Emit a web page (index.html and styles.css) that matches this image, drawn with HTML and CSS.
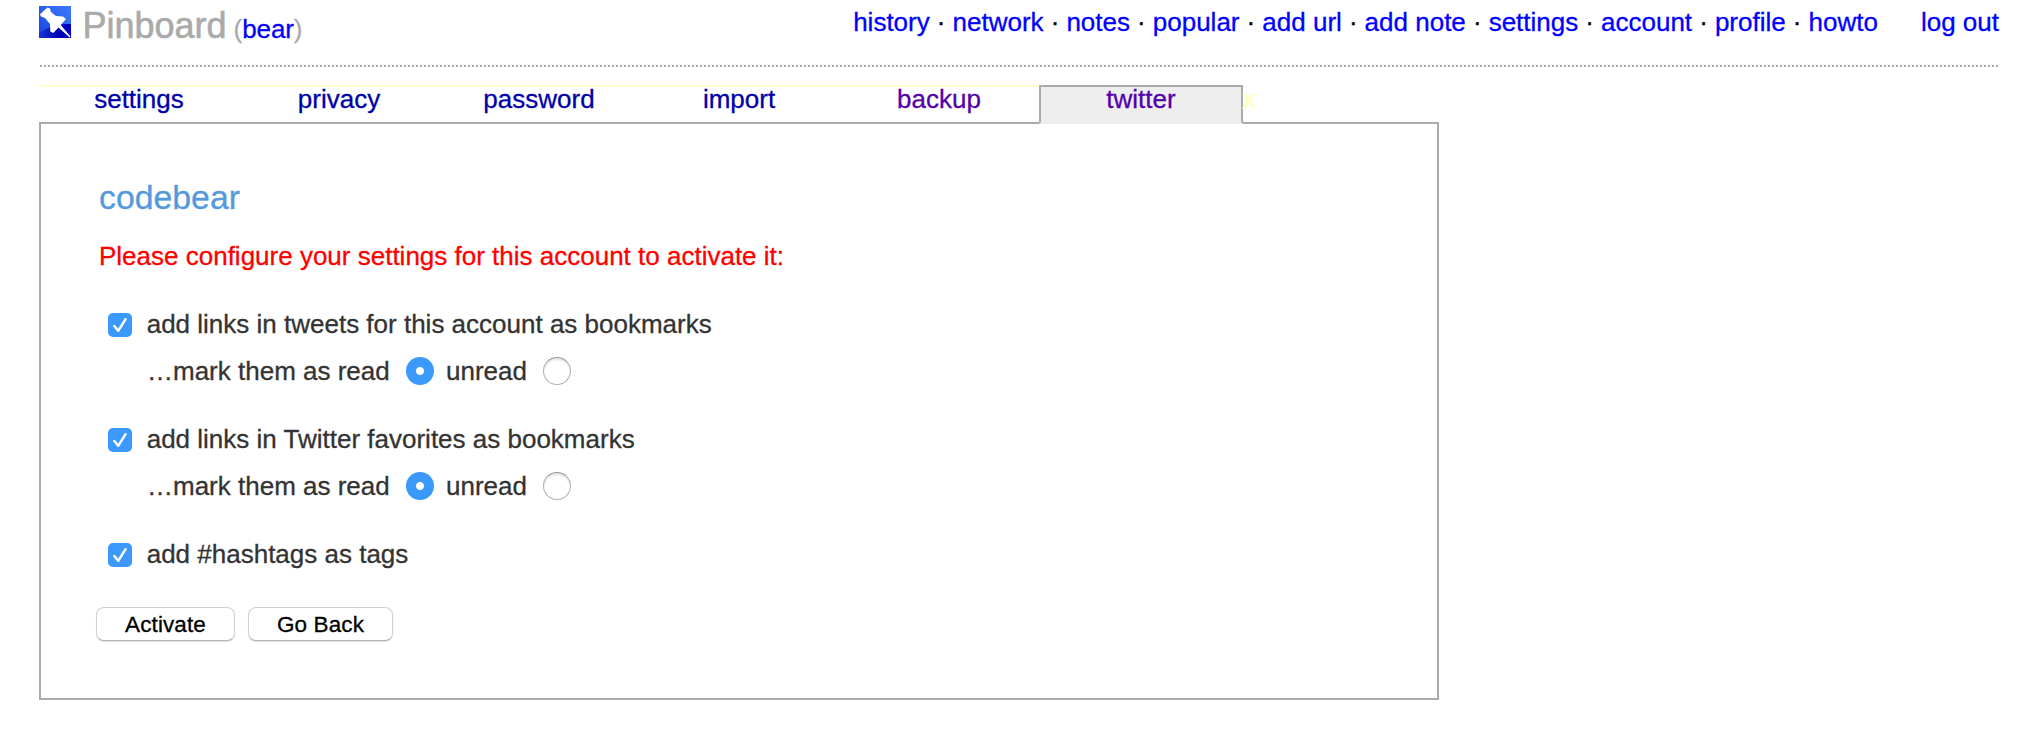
FILE: index.html
```html
<!DOCTYPE html>
<html lang="en">
<head>
<meta charset="utf-8">
<title>Pinboard: twitter settings</title>
<link rel="stylesheet" href="styles.css">
</head>
<body>
<header class="banner">
  <div class="brand">
    <svg class="logo" viewBox="0 0 32 32" aria-hidden="true">
      <defs>
        <linearGradient id="sky" x1="1" y1="0" x2="0" y2="1">
          <stop offset="0" stop-color="#3d7cff"/>
          <stop offset="1" stop-color="#1742e0"/>
        </linearGradient>
        <linearGradient id="ground" x1="0" y1="0" x2="1" y2="0">
          <stop offset="0" stop-color="#163bd6"/>
          <stop offset=".6" stop-color="#0000b4"/>
          <stop offset="1" stop-color="#0000d0"/>
        </linearGradient>
      </defs>
      <rect width="32" height="32" fill="url(#sky)"/>
      <path d="M0 27Q14 17 32 18V32H0Z" fill="url(#ground)"/>
      <path d="M8.5 1.5L11 2.5L12 6L17 10L24 10.5L27 13L21.7 19L31.5 30.5L30.7 31.5L19.5 21.5L14.3 27L11.3 25.5L11 18L6 12L2 10.5L1 8.3Z" fill="#fff"/>
    </svg>
    <span class="name">Pinboard</span>
    <span class="user">(<a href="#">bear</a>)</span>
  </div>
  <nav class="menu">
    <a href="#">history</a><i>·</i><a href="#">network</a><i>·</i><a href="#">notes</a><i>·</i><a href="#">popular</a><i>·</i><a href="#">add url</a><i>·</i><a href="#">add note</a><i>·</i><a href="#">settings</a><i>·</i><a href="#">account</a><i>·</i><a href="#">profile</a><i>·</i><a href="#">howto</a><a class="logout" href="#">log out</a>
  </nav>
</header>
<svg class="rule" width="1960" height="2" aria-hidden="true"><path d="M1 1H1960" stroke="#aaa" stroke-width="2" stroke-dasharray="2 2"/></svg>
<nav class="tabs">
  <a class="tab" href="#">settings</a>
  <a class="tab" href="#">privacy</a>
  <a class="tab" href="#">password</a>
  <a class="tab" href="#">import</a>
  <a class="tab seen" href="#">backup</a>
  <a class="tab seen active" href="#">twitter</a>
  <span class="tab-end">x</span>
</nav>
<main class="panel">
  <h1 class="account">codebear</h1>
  <p class="warning">Please configure your settings for this account to activate it:</p>
  <form class="options">
    <div class="option">
      <div class="line"><svg class="check" viewBox="0 0 24 24"><path d="M6.3 13L10.2 17.8L17.6 6.2"/></svg><span>add links in tweets for this account as bookmarks</span></div>
      <div class="line sub"><span class="read">…mark them as read</span><span class="radio on"></span><span class="unread">unread</span><span class="radio"></span></div>
    </div>
    <div class="option">
      <div class="line"><svg class="check" viewBox="0 0 24 24"><path d="M6.3 13L10.2 17.8L17.6 6.2"/></svg><span>add links in Twitter favorites as bookmarks</span></div>
      <div class="line sub"><span class="read">…mark them as read</span><span class="radio on"></span><span class="unread">unread</span><span class="radio"></span></div>
    </div>
    <div class="option">
      <div class="line"><svg class="check" viewBox="0 0 24 24"><path d="M6.3 13L10.2 17.8L17.6 6.2"/></svg><span>add #hashtags as tags</span></div>
    </div>
    <div class="buttons">
      <button type="button" class="button activate">Activate</button>
      <button type="button" class="button back">Go Back</button>
    </div>
  </form>
</main>
</body>
</html>
```
FILE: styles.css
```css
* { box-sizing: border-box; }

body {
  margin: 0;
  padding: 0 25px 0 39px;
  background: #fff;
  color: #333;
  font: 26px/30px "Liberation Sans", Arial, Helvetica, sans-serif;
  -webkit-text-stroke: .3px currentColor;
}

a { color: #00f; text-decoration: none; }

.banner {
  display: flex;
  justify-content: space-between;
  height: 65px;
}

.brand {
  display: flex;
  align-items: baseline;
  height: 44px;
  padding-top: 6px;
  color: #aaa;
  white-space: nowrap;
}
.logo { width: 32px; height: 32px; flex: none; }
.name { margin-left: 11.5px; font-size: 36px; line-height: 32px; -webkit-text-stroke: .6px #aaa; }
.user { margin-left: 7px; letter-spacing: -.1px; }

.menu {
  display: flex;
  padding-top: 7px;
  color: #000;
  white-space: nowrap;
}
.menu i {
  display: flex;
  justify-content: center;
  width: 22.8px;
  font-style: normal;
}
.logout { margin-left: 43px; }

.rule { display: block; }

.tabs {
  display: flex;
  position: relative;
  z-index: 1;
  margin-top: 18px;
  height: 39px;
}
.tab {
  width: 200px;
  height: 37px;
  border-top: 2px solid #ffc;
  line-height: 24px;
  text-align: center;
  color: #00a;
}
.seen { color: #50a; }
.active {
  width: 204px;
  height: 39px;
  border: 2px solid #aaa;
  border-bottom-color: #eee;
  background: #eee;
}
.tab-end { color: #ffc; font-weight: bold; line-height: 28px; margin-left: -1px; }

.panel {
  width: 1400px;
  height: 578px;
  margin-top: -2px;
  padding: 54px 0 0 55px;
  border: 2px solid #aaa;
}
.account {
  margin: 0 0 0 3px;
  font-size: 33.8px;
  line-height: 38px;
  font-weight: normal;
  color: #59d;
}
.warning { margin: 25px 0 0 3px; color: red; }

.options { margin-top: 38px; }
.option { margin-bottom: 38px; }
.line { display: flex; align-items: center; height: 30px; white-space: nowrap; }
.sub { margin-top: 17px; padding-left: 51px; }

.check {
  width: 24px;
  height: 24px;
  margin: 2px 14.7px 0 12px;
  border-radius: 5px;
  background: #3b99fc;
  fill: none;
  stroke: #fff;
  stroke-width: 2.5;
  stroke-linecap: round;
  stroke-linejoin: round;
}
.radio {
  width: 28px;
  height: 28px;
  border: 1px solid #b0b0b0;
  border-top-color: #999;
  border-radius: 50%;
  box-shadow: inset 0 2px 2px #e4e4e4;
}
.radio.on {
  border: 0;
  background: radial-gradient(circle, #fff 3.5px, #3b99fc 4.5px);
  box-shadow: none;
}
.read { width: 259px; }
.unread { width: 97px; margin-left: 12px; }

.buttons { display: flex; gap: 13px; margin-top: 1px; }
.button {
  height: 34px;
  padding: 2px 0 0;
  border: 1px solid #d2d2d2;
  border-bottom-color: #b4b4b4;
  border-radius: 8px;
  background: #fff;
  box-shadow: 0 1px 1px #ddd;
  color: #000;
  font: 22.5px/30px "Liberation Sans", Arial, sans-serif;
  letter-spacing: .1px;
}
.activate { width: 139px; }
.back { width: 145px; }
```
